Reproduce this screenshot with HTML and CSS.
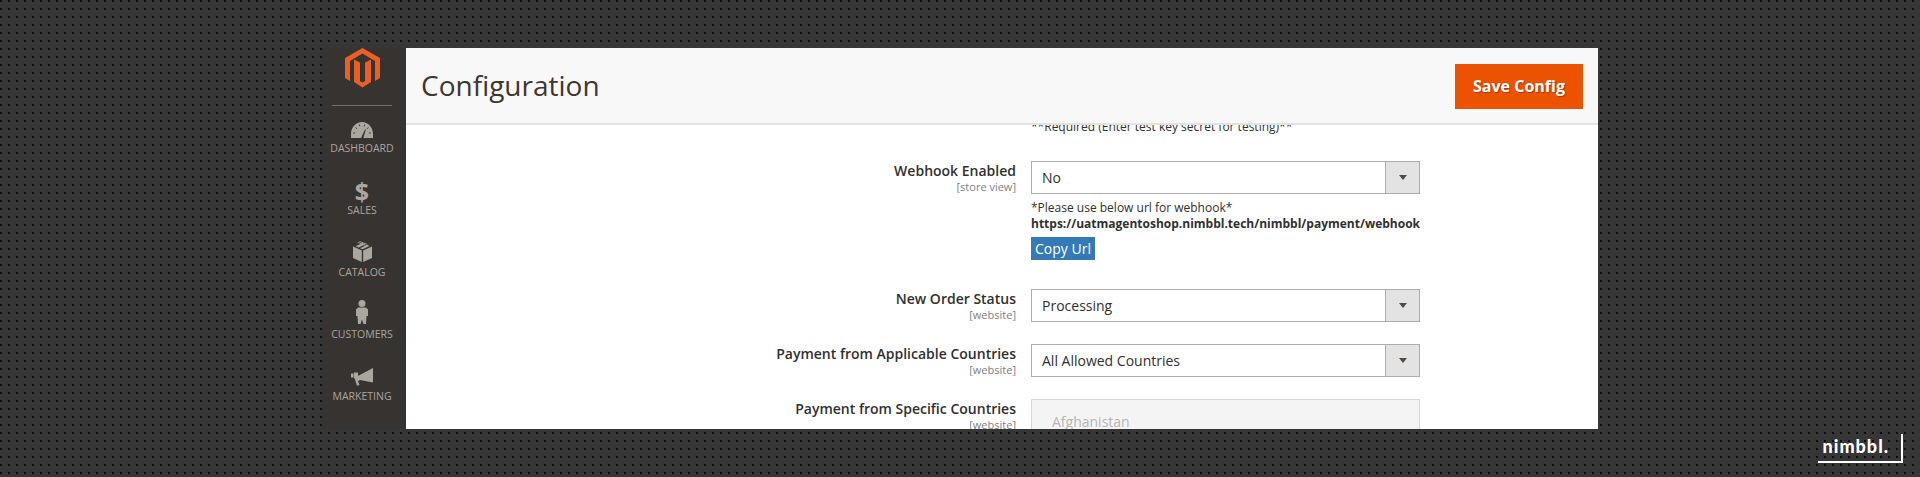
FILE: index.html
```html
<!DOCTYPE html>
<html lang="en">
<head>
<meta charset="utf-8">
<title>Configuration</title>
<link rel="stylesheet" href="styles.css">
</head>
<body>
<div class="window">
  <nav class="sidebar">
    <div class="logo-box">
      <svg class="logo" width="35" height="40" viewBox="0 0 35 40"><path fill="#eb5f22" d="M17.500 0 35 10V30L30 33V13L17.500 5.500 5 13V33L0 30V10Z"/><path fill="#eb5f22" d="M9 11.500 15 14.500V33L17.500 34.500 20 33V14.500L26 11.500V34L17.500 39.500 9 34Z"/></svg>
    </div>
    <a class="nav-item"><span class="ico"><svg width="22" height="16" viewBox="0 0 24 16" preserveAspectRatio="none"><path fill="#aaa6a0" d="M0 16v-4C0 5 5.500 0 12 0s12 5 12 12v4H13.500l2.700-8.500-.8-.3L11 16Z"/><path stroke="#373330" stroke-width="1" d="M2.500 11h2M5 5.500l1.500 1.200M9 2.500l.7 1.800M15 2.500l-.7 1.800M19 5.500l-1.500 1.200M21.500 11h-2"/></svg></span><span>DASHBOARD</span></a>
    <a class="nav-item"><span class="ico dollar">$</span><span>SALES</span></a>
    <a class="nav-item"><span class="ico"><svg width="19" height="21" viewBox="0 0 19 21"><path fill="#aaa6a0" d="M0 5.500 8.800 9.500V21L0 17ZM19 5.500 10.200 9.500V21L19 17ZM9.500 8.300 7 7.200 14 3.800 16.500 4.900ZM5.700 6.600 2.500 5.200 9.500 2 12.500 3.200Z"/><path fill="#aaa6a0" d="M7 .2 14.500 3 13.600 3.600 6 .8ZM5 1l8 3.200-1 .5-7.800-3.200Z"/></svg></span><span>CATALOG</span></a>
    <a class="nav-item"><span class="ico"><svg width="12" height="24" viewBox="0 0 12 24"><circle cx="6" cy="3.500" r="3.500" fill="#aaa6a0"/><path fill="#aaa6a0" d="M2 7.500h8l2 2v6.500h-1.500L10 24H7.500L6 19.500 4.500 24H2l-.5-8H0V9.500Z"/></svg></span><span>CUSTOMERS</span></a>
    <a class="nav-item"><span class="ico"><svg width="22" height="18" viewBox="0 0 22 18"><path fill="#aaa6a0" d="M22 0v14.500L9 12l-2 1 1.500 4-2.500.8L4 11.500V9.500L22 0ZM0 5.500h2.500v4H0Z"/><path fill="#aaa6a0" d="M3 4.500h4v6H3Z"/></svg></span><span>MARKETING</span></a>
    <a class="nav-item"><span class="content-ico"></span></a>
  </nav>
  <main class="main">
    <header class="page-head">
      <h1 class="page-title">Configuration</h1>
      <button class="save-btn" type="button">Save Config</button>
    </header>
    <section class="form">
      <p class="cut-note">**Required (Enter test key secret for testing)**</p>
      <div class="row row-webhook">
        <div class="label"><strong>Webhook Enabled</strong><small>[store view]</small></div>
        <div class="field">
          <div class="select"><span>No</span><i class="caret"></i></div>
          <p class="note">*Please use below url for webhook*</p>
          <p class="url">https://uatmagentoshop.nimbbl.tech/nimbbl/payment/webhook</p>
          <button class="copy-btn" type="button">Copy Url</button>
        </div>
      </div>
      <div class="row row-status">
        <div class="label"><strong>New Order Status</strong><small>[website]</small></div>
        <div class="field"><div class="select"><span>Processing</span><i class="caret"></i></div></div>
      </div>
      <div class="row">
        <div class="label"><strong>Payment from Applicable Countries</strong><small>[website]</small></div>
        <div class="field"><div class="select"><span>All Allowed Countries</span><i class="caret"></i></div></div>
      </div>
      <div class="row">
        <div class="label"><strong>Payment from Specific Countries</strong><small>[website]</small></div>
        <div class="field"><div class="multi">Afghanistan</div></div>
      </div>
    </section>
  </main>
</div>
<div class="brand"><span>nimbbl.</span></div>
</body>
</html>
```
FILE: styles.css
```css
* { box-sizing: border-box; }
html, body { margin: 0; height: 477px; overflow: hidden; }
body {
  position: relative;
  padding: 48px 322px 0 323px;
  font-family: "Open Sans", sans-serif;
  color: #303030;
  background-color: #363636;
  background-image:
    linear-gradient(to right, #363636 6px, transparent 6px),
    linear-gradient(to bottom, #363636 6px, #0d0d0d 6px);
  background-size: 8px 8px;
  background-position: 2px 2px;
}
.window { display: flex; height: 381px; overflow: hidden; }

.sidebar { width: 83px; flex: none; background: #373330; display: flex; flex-direction: column; align-items: center; overflow: hidden; padding-right: 5px; }
.logo-box { width: 60px; height: 58px; flex: none; border-bottom: 1px solid #736e69; display: flex; justify-content: center; margin-bottom: 15px; }
.logo { display: block; }
.nav-item { flex: none; height: 62px; width: 100%; display: flex; flex-direction: column; align-items: center; color: #aaa6a0; font-size: 10.500px; line-height: 14px; }
.ico { height: 20px; flex: none; display: flex; align-items: flex-end; justify-content: center; padding-bottom: 3px; }
.ico svg { display: block; flex: none; }
.dollar { font-size: 25px; font-weight: 700; line-height: 17px; padding-bottom: 3px; }
.content-ico { width: 22px; height: 16px; border: 2px solid #aaa6a0; margin-top: 4px; }

.main { flex: 1; min-width: 0; background: #fff; display: flex; flex-direction: column; overflow: hidden; }
.page-head { flex: none; height: 77px; background: #f8f8f8; border-bottom: 2px solid #e3e3e3; display: flex; justify-content: space-between; align-items: flex-start; padding: 15px 15px 0; position: relative; z-index: 1; }
.page-title { margin: 0; font-size: 28px; font-weight: 400; line-height: 44px; color: #41362f; }
.save-btn { width: 128px; height: 45px; margin-top: 1px; border: 0; padding: 0 0 2px; background: #eb5202; color: #fff; font: 700 16px "Open Sans", sans-serif; text-shadow: 1px 1px 1px rgba(0,0,0,.3); }

.cut-note { margin: -7px 0 0 625px; font-size: 12px; line-height: 17px; color: #303030; white-space: nowrap; }
.row { display: flex; align-items: flex-start; margin-bottom: 22px; }
.row-webhook { margin-top: 26px; margin-bottom: 29px; }
.label { width: 610px; flex: none; text-align: right; padding-top: 1px; }
.label strong { display: block; font-size: 14px; font-weight: 600; line-height: 18px; }
.label small { display: block; font-size: 11px; line-height: 13px; color: #808080; }
.field { width: 389px; margin-left: 15px; flex: none; }
.select { height: 33px; border: 1px solid #adadad; display: flex; align-items: center; justify-content: space-between; font-size: 14px; padding-left: 10px; background: #fff; }
.caret { width: 34px; height: 31px; background: #e3e3e3; border-left: 1px solid #adadad; position: relative; flex: none; }
.caret::after { content: ""; position: absolute; left: 13px; top: 13px; border: 4px solid transparent; border-top: 5px solid #514943; border-bottom: 0; }
.note { margin: 6px 0 0; font-size: 12px; line-height: 16px; color: #303030; }
.url { margin: 0; font-size: 12px; line-height: 16px; font-weight: 700; white-space: nowrap; }
.copy-btn { display: block; margin-top: 5px; height: 23px; width: 64px; padding: 0; border: 0; background: #337ab7; color: #fff; font: 400 14px "Open Sans", sans-serif; }
.multi { height: 60px; border: 1px solid #d6d6d6; background: #f4f4f4; color: #b5b5b5; font-size: 14px; padding: 12px 20px; }

.brand { position: absolute; left: 1818px; top: 434px; width: 85px; height: 29px; border-right: 2px solid #fff; border-bottom: 2px solid #fff; display: flex; align-items: flex-end; justify-content: flex-end; padding: 0 12px 5px 0; }
.brand span { font-family: "Lato", sans-serif; font-weight: 900; font-size: 18px; line-height: 20px; color: #fff; letter-spacing: 1px; }
```
